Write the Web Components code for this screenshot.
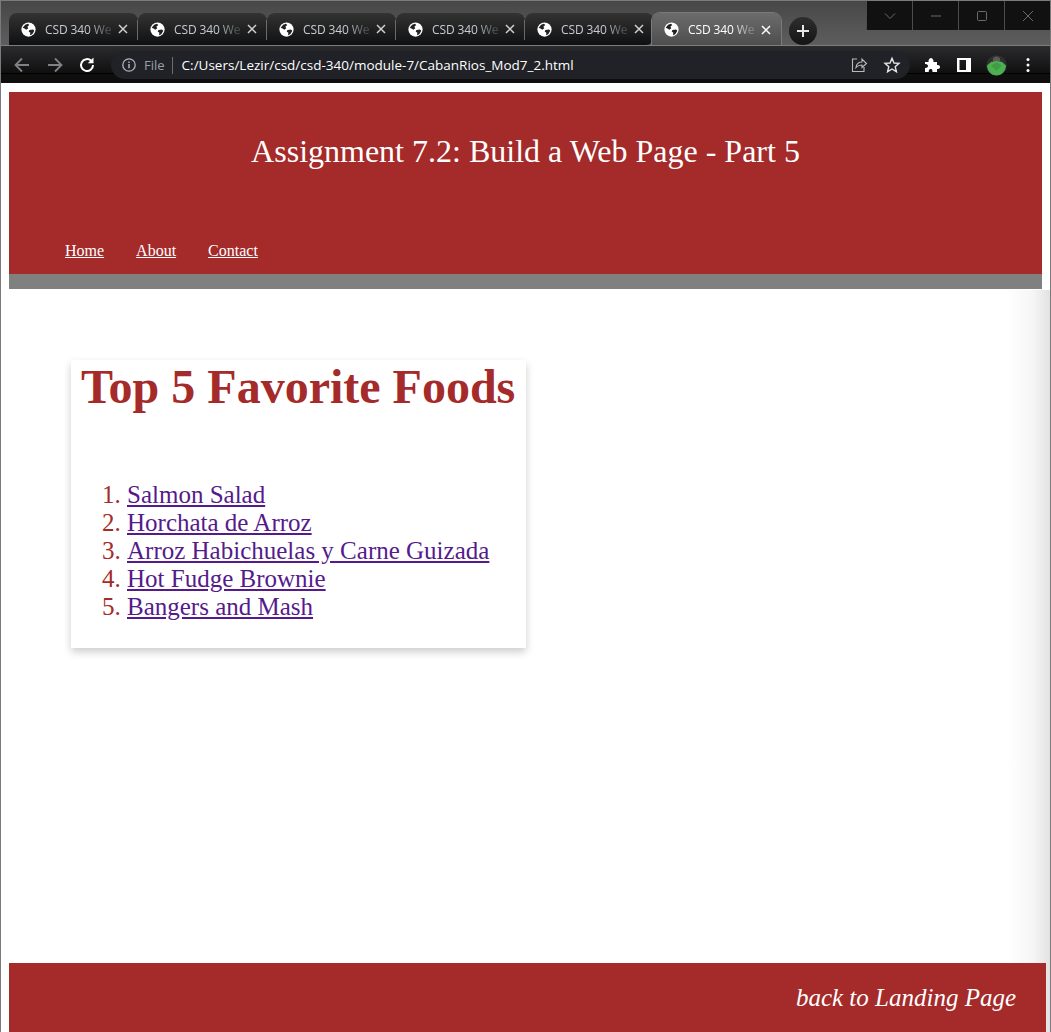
<!DOCTYPE html>
<html lang="en"><head><meta charset="utf-8"><title>CSD 340</title>
<style>html,body{margin:0;padding:0;background:#fff}</style></head>
<body>
<browser-window>
  <browser-tabs slot="chrome"></browser-tabs>
  <browser-toolbar slot="chrome" url="C:/Users/Lezir/csd/csd-340/module-7/CabanRios_Mod7_2.html"></browser-toolbar>
  <site-header title="Assignment 7.2: Build a Web Page - Part 5"></site-header>
  <food-card heading="Top 5 Favorite Foods">
    <li><a href="#a">Salmon Salad</a></li>
    <li><a href="#b">Horchata de Arroz</a></li>
    <li><a href="#c">Arroz Habichuelas y Carne Guizada</a></li>
    <li><a href="#d">Hot Fudge Brownie</a></li>
    <li><a href="#e">Bangers and Mash</a></li>
  </food-card>
  <site-footer text="back to Landing Page"></site-footer>
</browser-window>
<script>
const define=(name,html)=>customElements.define(name,class extends HTMLElement{
  constructor(){super();this.attachShadow({mode:'open'})}
  connectedCallback(){this.shadowRoot.innerHTML=html(this)}
});
const GLOBE=`<svg width="15" height="15" viewBox="0 0 16 16" style="flex:none"><circle cx="8" cy="8" r="7.600" fill="#fff"/><path fill="#202124" d="M1.800 6 4.400 2.800 7.400 1.800 8.800 3.200 6.800 5 7.800 6.600 5.600 8.200 3.800 6.800ZM9 8.400 12.800 8 14.200 9.400 12 13 9.600 14.200 10 11.400 8.200 10.200Z"/></svg>`;

define('browser-window',()=>`<style>
:host{display:flex;flex-direction:column;box-sizing:border-box;width:1051px;height:1032px;border:1px solid #7b7b7b;border-bottom:0;position:relative;overflow:hidden;background:#fff;font-family:"Liberation Serif",serif}
.chrome{display:flex;flex-direction:column;flex:none}
.page{flex:1;display:flex;flex-direction:column;padding:9px 0 0 8px;position:relative;min-height:0}
.shade{position:absolute;right:0;top:207px;bottom:0;width:44px;background:linear-gradient(90deg,rgba(225,225,225,0),rgba(225,225,225,.3) 60%,#e2e2e2)}
</style><div class="chrome"><slot name="chrome"></slot></div><div class="page"><div class="shade"></div><slot></slot></div>`);

define('browser-tabs',()=>{
  const tab=(cls)=>`<div class="tab ${cls}">${GLOBE}<span class="t">CSD 340 We</span><svg class="x" width="10" height="10" viewBox="0 0 10 10"><path d="M1 1 9 9M9 1 1 9" stroke="${cls==='on'?'#fff':'#d0d0d0'}" stroke-width="1.500"/></svg></div>`;
  return `<style>
:host{display:flex;height:45px;box-sizing:border-box;padding:12px 0 0 8px;position:relative;background:linear-gradient(#474747,#5e5e5e);font:12px "Open Sans",sans-serif;border-bottom:1px solid #7d7d7d;align-items:flex-start}
.tab{width:129px;height:32px;box-sizing:border-box;border-radius:8px 8px 0 0;background:linear-gradient(#333,#0f1012);display:flex;align-items:center;padding:0 9px 0 12px;color:#c9cbce;position:relative;flex:none}
.tab:not(.nosep):not(.on)::after{content:"";position:absolute;right:0;top:7px;height:20px;width:1px;background:#6a6a6a}
.tab.nosep{border-bottom-right-radius:8px}
.tab.on{background:linear-gradient(#6c6c6c,#4d4d4d);color:#fff;height:33px;margin:0 0 -1px -2px;box-shadow:0 0 0 1px #7a7a7a;clip-path:inset(-1px -1px 1px -1px)}
.t{margin-left:9px;width:66px;white-space:nowrap;flex:none;-webkit-mask-image:linear-gradient(90deg,#000 66%,rgba(0,0,0,.25) 96%);mask-image:linear-gradient(90deg,#000 66%,rgba(0,0,0,.25) 96%);letter-spacing:-.1px}
.x{margin-left:7px;flex:none}
.new{width:28px;height:28px;border-radius:50%;background:linear-gradient(#2e2e2e,#141414);margin:4px 0 0 8px;display:flex;align-items:center;justify-content:center;flex:none}
.win{position:absolute;top:0;right:0;display:flex;height:29px}
.win div{width:45px;background:#111;border-left:1px solid #4c4c4c;display:flex;align-items:center;justify-content:center}
</style>
${tab('')}${tab('')}${tab('')}${tab('')}${tab('nosep')}${tab('on')}
<div class="new"><svg width="14" height="14" viewBox="0 0 14 14"><path d="M7 1v12M1 7h12" stroke="#e8e8e8" stroke-width="2"/></svg></div>
<div class="win">
<div><svg width="12" height="12" viewBox="0 0 12 12"><path d="M1 3.500 6 8.500 11 3.500" fill="none" stroke="#6b6b6b"/></svg></div>
<div><svg width="12" height="12" viewBox="0 0 12 12"><path d="M1 6H11" stroke="#6b6b6b"/></svg></div>
<div><svg width="12" height="12" viewBox="0 0 12 12"><rect x="1.500" y="1.500" width="9" height="9" rx="1" fill="none" stroke="#6b6b6b"/></svg></div>
<div><svg width="12" height="12" viewBox="0 0 12 12"><path d="M1 1 11 11M11 1 1 11" stroke="#6b6b6b"/></svg></div>
</div>`});

define('browser-toolbar',el=>`<style>
:host{display:flex;height:37px;box-sizing:border-box;background:linear-gradient(#2b2b2d 0,#101011 27px,#000 27px,#000 28px,#0e0e0e 28px);padding:5px 0 0;align-items:flex-start;font:13.500px "Open Sans",sans-serif;color:#fff}
.nav{display:flex;align-items:center;gap:13px;padding-left:11px;flex:none;height:28px}
.nav svg{display:block}
.nav svg:last-child{margin-left:-1px}
.omni{margin-left:14px;width:799px;height:28px;flex:none;background:#202227;border-radius:14px;display:flex;align-items:center;box-sizing:border-box;padding:0 9px 0 10px;position:relative}
.file{color:#9aa0a6;margin-left:7px;font-size:13px}
.bar{width:1px;height:17px;background:#6a6d72;margin:0 9px 0 7px}
.url{white-space:nowrap;flex:1}
.acts{display:flex;gap:15px;align-items:center}
.ext{display:flex;align-items:center;flex:none;margin-left:14px;height:28px}
.ava{width:21px;height:21px;border-radius:50%;overflow:hidden;display:block}
</style>
<div class="nav">
<svg width="20" height="20" viewBox="0 0 20 20"><path d="M17 10H4M10 3.500 3.500 10 10 16.500" fill="none" stroke="#7f8184" stroke-width="1.800"/></svg>
<svg width="20" height="20" viewBox="0 0 20 20"><path d="M3 10H16M10 3.500 16.500 10 10 16.500" fill="none" stroke="#7f8184" stroke-width="1.800"/></svg>
<svg width="20" height="20" viewBox="0 0 20 20"><path d="M16 10A6 6 0 1 1 14.200 5.800" fill="none" stroke="#fff" stroke-width="2"/><path d="M16.500 2.500V8.200H10.800Z" fill="#fff"/></svg>
</div>
<div class="omni">
<svg width="16" height="16" viewBox="0 0 16 16" style="flex:none"><circle cx="8" cy="8" r="6.200" fill="none" stroke="#b0b3b8" stroke-width="1.300"/><path d="M8 7v4.200M8 4.600v1.400" stroke="#b0b3b8" stroke-width="1.500"/></svg>
<span class="file">File</span><span class="bar"></span>
<span class="url">${el.getAttribute('url')}</span>
<div class="acts">
<svg width="18" height="18" viewBox="0 0 18 18"><path d="M7 3H2.500V15.500H14V11M6 11.500C6.500 8 9 6 12 6V3L16.500 7.500 12 11.500V9C9.500 9 7.500 9.800 6 11.500Z" fill="none" stroke="#b8babd" stroke-width="1.100"/></svg>
<svg width="18" height="18" viewBox="0 0 18 18"><path d="M9 2.200 11 7 16 7.400 12.200 10.700 13.400 15.700 9 13 4.600 15.700 5.800 10.700 2 7.400 7 7Z" fill="none" stroke="#e3e3e3" stroke-width="1.400"/></svg>
</div></div>
<div class="ext">
<svg width="16" height="16" viewBox="0 0 16 16"><path fill="#fff" d="M1 5H4.500C4.300 2 6 1 7 1S9.700 2 9.500 5H13V8C15.800 7.800 16 9.200 16 10S15.800 12.200 13 12V15H8.500C8.700 12.500 7.500 12 6.700 12S4.500 12.500 4.700 15H1V11C3.200 11.200 4 10 4 9S3.200 6.800 1 7Z"/></svg>
<svg width="16" height="16" viewBox="0 0 16 16" style="margin-left:16px"><path fill="#fff" fill-rule="evenodd" d="M1 1H15V15H1ZM3.500 3V13H10V3Z"/></svg>
<svg class="ava" style="margin-left:14px" viewBox="0 0 20 20"><circle cx="10" cy="10" r="10" fill="#2f2f2f"/><circle cx="10" cy="5" r="3.500" fill="#5a5a5a"/><path d="M1 10 5 6.500H7.500L10 5.500 12.500 6.500H15L19 10C19 15 15 19.500 10 19.500S1 15 1 10Z" fill="#4caf50"/><path d="M5 10 10 7 15 10 10 15Z" fill="#3f9c45"/></svg>
<svg width="16" height="16" viewBox="0 0 16 16" style="margin-left:13px"><circle cx="8" cy="2.500" r="1.500" fill="#fff"/><circle cx="8" cy="8" r="1.500" fill="#fff"/><circle cx="8" cy="13.500" r="1.500" fill="#fff"/></svg>
</div>`);

define('site-header',el=>`<style>
:host{display:block;flex:none;margin-right:8px;background:#808080;padding-bottom:15px;color:#fff;position:relative;z-index:1}
.red{background:#a52a2a;height:182px;display:flex;flex-direction:column;box-sizing:border-box}
h1{margin:0;font:400 32px/37px "Liberation Serif",serif;text-align:center;padding-top:41px;height:109px;box-sizing:border-box;flex:none}
nav{display:flex;gap:32px;padding:41px 0 0 56px;font-size:16px;line-height:18px}
a{color:#fff}
</style><div class="red"><h1>${el.getAttribute('title')}</h1><nav><a href="#h">Home</a><a href="#a">About</a><a href="#c">Contact</a></nav></div>`);

define('food-card',el=>`<style>
:host{display:block;flex:none;align-self:flex-start;width:455px;height:288px;box-sizing:border-box;margin:71px 0 0 62px;padding:0 10px;background:#fff;box-shadow:0 4px 8px rgba(0,0,0,.2);color:#a52a2a;position:relative;z-index:1}
h2{margin:0;font:700 48px/53px "Liberation Serif",serif;white-space:nowrap}
ol{margin:68px 0 0;padding:0 0 0 46px;font-size:25px;line-height:28px}
</style><h2>${el.getAttribute('heading')}</h2><ol><slot></slot></ol>`);

define('site-footer',el=>`<style>
:host{display:flex;flex:none;margin:auto 4px 0 0;height:69px;background:#a52a2a;color:#fff;align-items:center;justify-content:flex-end;padding-right:30px;font:italic 25px "Liberation Serif",serif;position:relative;z-index:1}
</style><span>${el.getAttribute('text')}</span>`);
</script>
<style>food-card a{color:#551a8b}</style>
</body></html>
